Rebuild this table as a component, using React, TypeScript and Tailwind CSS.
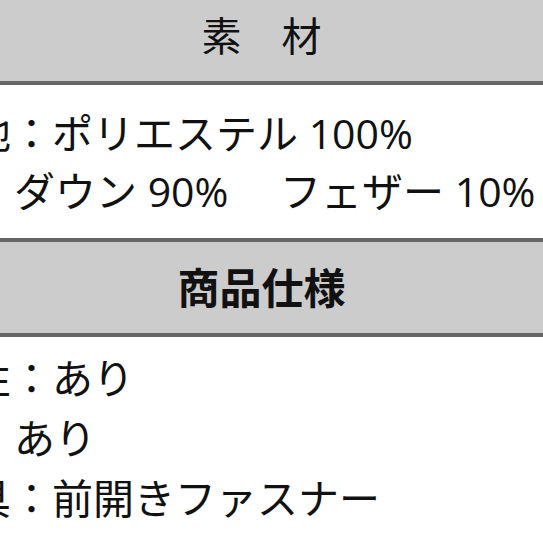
import React from "react";

const rows1 = [
	{ text: "表地：ポリエステル 100%", offset: "ml-[-71px]" },
	{ text: "詰め物：ダウン 90%　 フェザー 10%", offset: "ml-[-150px]" },
];

const rows2 = [
	{ text: "撥水性：あり", offset: "ml-[-112px]" },
	{ text: "フード：あり", offset: "ml-[-150px]" },
	{ text: "開閉具：前開きファスナー", offset: "ml-[-112px]" },
];

export default function App() {
	return (
		<div
			className="w-[543px] h-[543px] overflow-hidden bg-white text-[#111]"
			style={{ fontFamily: '"Open Sans", "Noto Sans CJK JP", sans-serif' }}
		>
			<header className="-mt-[10px] h-[95px] pr-[20px] bg-[#cccccc] border-b-4 border-[#666666] flex items-center justify-center">
				<h2 className="text-[40px] leading-none">素　材</h2>
			</header>
			<section className="pt-[19px] pb-[18px] whitespace-nowrap">
				{rows1.map((r) => (
					<p key={r.text} className={`text-[41px] leading-[58px] ${r.offset}`}>
						{r.text}
					</p>
				))}
			</section>
			<header className="h-[99px] pr-[20px] bg-[#cccccc] border-y-4 border-[#666666] flex items-center justify-center">
				<h2 className="text-[42px] leading-none font-bold">商品仕様</h2>
			</header>
			<section className="pt-[11px] whitespace-nowrap">
				{rows2.map((r) => (
					<p key={r.text} className={`text-[41px] leading-[60px] ${r.offset}`}>
						{r.text}
					</p>
				))}
			</section>
		</div>
	);
}
